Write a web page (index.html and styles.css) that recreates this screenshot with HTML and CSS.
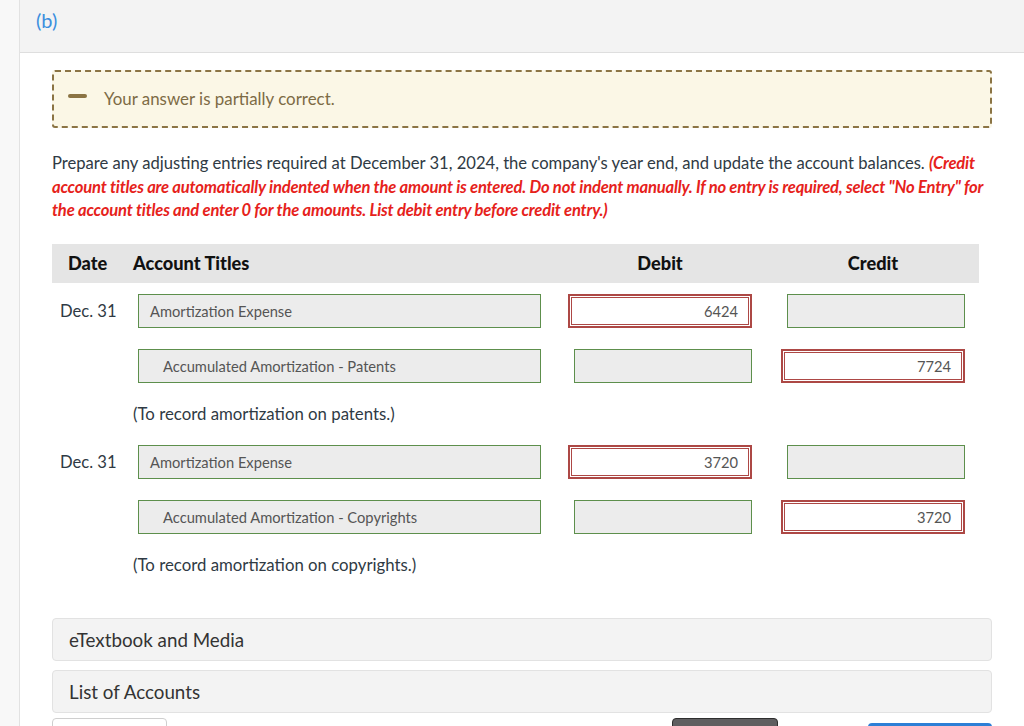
FILE: index.html
```html
<!DOCTYPE html>
<html lang="en">
<head>
<meta charset="utf-8">
<title>Adjusting entries</title>
<link rel="stylesheet" href="styles.css">
</head>
<body>
<div class="page">
  <div class="rail"></div>
  <div class="main">
    <div class="part-header"><span class="part-label">(b)</span></div>
    <div class="content">
      <div class="feedback">
        <span class="minus"></span>
        <span class="feedback-text">Your answer is partially correct.</span>
      </div>

      <p class="instructions">Prepare any adjusting entries required at December 31, 2024, the company's year end, and update the account balances. <em class="red">(Credit<br>account titles are automatically indented when the amount is entered. Do not indent manually. If no entry is required, select "No Entry" for<br>the account titles and enter 0 for the amounts. List debit entry before credit entry.)</em></p>

      <div class="journal">
        <div class="jrow head">
          <div class="c-date">Date</div>
          <div class="c-acct">Account Titles</div>
          <div class="c-debit"><span class="hlabel">Debit</span></div>
          <div class="c-credit"><span class="hlabel">Credit</span></div>
        </div>

        <div class="jrow entry first">
          <div class="c-date">Dec. 31</div>
          <div class="c-acct"><div class="field acct">Amortization Expense</div></div>
          <div class="c-debit"><div class="field amt wrong">6424</div></div>
          <div class="c-credit"><div class="field amt"></div></div>
        </div>
        <div class="jrow entry">
          <div class="c-date"></div>
          <div class="c-acct"><div class="field acct indent">Accumulated Amortization - Patents</div></div>
          <div class="c-debit"><div class="field amt"></div></div>
          <div class="c-credit"><div class="field amt wrong">7724</div></div>
        </div>
        <div class="memo">(To record amortization on patents.)</div>

        <div class="jrow entry">
          <div class="c-date">Dec. 31</div>
          <div class="c-acct"><div class="field acct">Amortization Expense</div></div>
          <div class="c-debit"><div class="field amt wrong">3720</div></div>
          <div class="c-credit"><div class="field amt"></div></div>
        </div>
        <div class="jrow entry">
          <div class="c-date"></div>
          <div class="c-acct"><div class="field acct indent">Accumulated Amortization - Copyrights</div></div>
          <div class="c-debit"><div class="field amt"></div></div>
          <div class="c-credit"><div class="field amt wrong">3720</div></div>
        </div>
        <div class="memo">(To record amortization on copyrights.)</div>
      </div>

      <div class="panel">eTextbook and Media</div>
      <div class="panel">List of Accounts</div>

      <div class="buttons">
        <span class="btn btn-light"></span>
        <span class="spacer"></span>
        <span class="btn btn-dark"></span>
        <span class="btn btn-blue"></span>
      </div>
    </div>
  </div>
</div>
</body>
</html>
```

FILE: styles.css
```css
html, body {
  margin: 0;
  padding: 0;
  background: #ffffff;
  font-family: Lato, "Open Sans", sans-serif;
  color: #333;
  height: 726px;
  overflow: hidden;
}

.page {
  display: flex;
  min-height: 726px;
}

.rail {
  width: 19px;
  flex: none;
  background: #f8f8f8;
  border-right: 1px solid #e2e2e2;
}

.main {
  flex: 1;
  min-width: 0;
}

.part-header {
  height: 53px;
  background: #f3f3f3;
  border-bottom: 1px solid #dedede;
  box-sizing: border-box;
  padding: 7px 0 0 16px;
}

.part-label {
  font-size: 20px;
  color: #3b8fde;
  line-height: 26px;
}

.content {
  padding: 17px 32px 0 32px;
}

.feedback {
  height: 58px;
  box-sizing: border-box;
  border: 2px dashed #8b7444;
  border-radius: 3px;
  background: #fbf7e6;
  display: flex;
  align-items: center;
  padding-left: 14px;
}

.minus {
  width: 19px;
  height: 4px;
  border-radius: 2px;
  background: #8b7444;
  margin-top: -6px;
}

.feedback-text {
  margin-left: 17px;
  font-size: 16.9px;
  color: #7d6b45;
  margin-top: -2px;
}

.instructions {
  margin: 24px 0 0 0;
  font-size: 16.6px;
  line-height: 23.5px;
  color: #2f3a44;
  white-space: nowrap;
}

.red {
  color: #e6221b;
  font-weight: bold;
  font-style: italic;
  letter-spacing: -0.2px;
}

.journal {
  margin-top: 21px;
  width: 927px;
}

.jrow {
  display: grid;
  grid-template-columns: 81px 422px 205px 219px;
  align-items: center;
}

.jrow.head {
  height: 39px;
  background: #e5e5e5;
  font-weight: 900;
  font-size: 18.2px;
  color: #111;
}

.head .c-date {
  padding-left: 16px;
}

.c-debit, .c-credit {
  display: flex;
  justify-content: flex-end;
}

.c-debit {
  padding-right: 8px;
}

.c-credit {
  padding-right: 14px;
}

.hlabel {
  width: 184px;
  text-align: center;
}

.jrow.entry {
  height: 34px;
  margin-top: 21px;
}

.jrow.entry.first {
  margin-top: 11px;
}

.entry .c-date {
  padding-left: 8px;
  font-size: 16.6px;
  color: #2f3a44;
}

.field {
  height: 34px;
  box-sizing: border-box;
  border: 1px solid #5d8f4c;
  background: #ececec;
  font-size: 14.7px;
  color: #555;
  line-height: 32px;
}

.field.acct {
  width: 403px;
  margin-left: 5px;
  padding-left: 11px;
}

.field.acct.indent {
  padding-left: 24px;
}

.field.amt {
  width: 178px;
  text-align: right;
  padding-right: 13px;
}

.field.amt.wrong {
  width: 184px;
  border: 2px solid #ad4845;
  background: #fff;
  box-shadow: inset 0 0 0 1px #ffffff, inset 0 0 0 2px #ad4845;
  line-height: 30px;
  padding-right: 12px;
}

.memo {
  margin: 20px 0 0 81px;
  font-size: 16.8px;
  line-height: 22px;
  color: #2f3a44;
}

.memo + .jrow.entry {
  margin-top: 20px;
}

.panel {
  height: 43px;
  box-sizing: border-box;
  background: #f3f3f3;
  border: 1px solid #e2e2e2;
  border-radius: 4px;
  padding-left: 16px;
  font-size: 18.8px;
  line-height: 41px;
  color: #333;
  margin-top: 9px;
}

.journal + .panel {
  margin-top: 42px;
}

.buttons {
  display: flex;
  margin-top: 5px;
  height: 30px;
}

.btn {
  display: block;
  height: 30px;
  box-sizing: border-box;
  border-radius: 4px;
}

.btn-light {
  width: 115px;
  border: 1px solid #cfcfcf;
  background: #fff;
}

.spacer {
  flex: 1;
}

.btn-dark {
  width: 106px;
  background: #5f5e60;
  border: 1px solid #2e2e2e;
}

.btn-blue {
  width: 124px;
  margin-left: 90px;
  margin-top: 5px;
  background: #2d7fd6;
}
```
